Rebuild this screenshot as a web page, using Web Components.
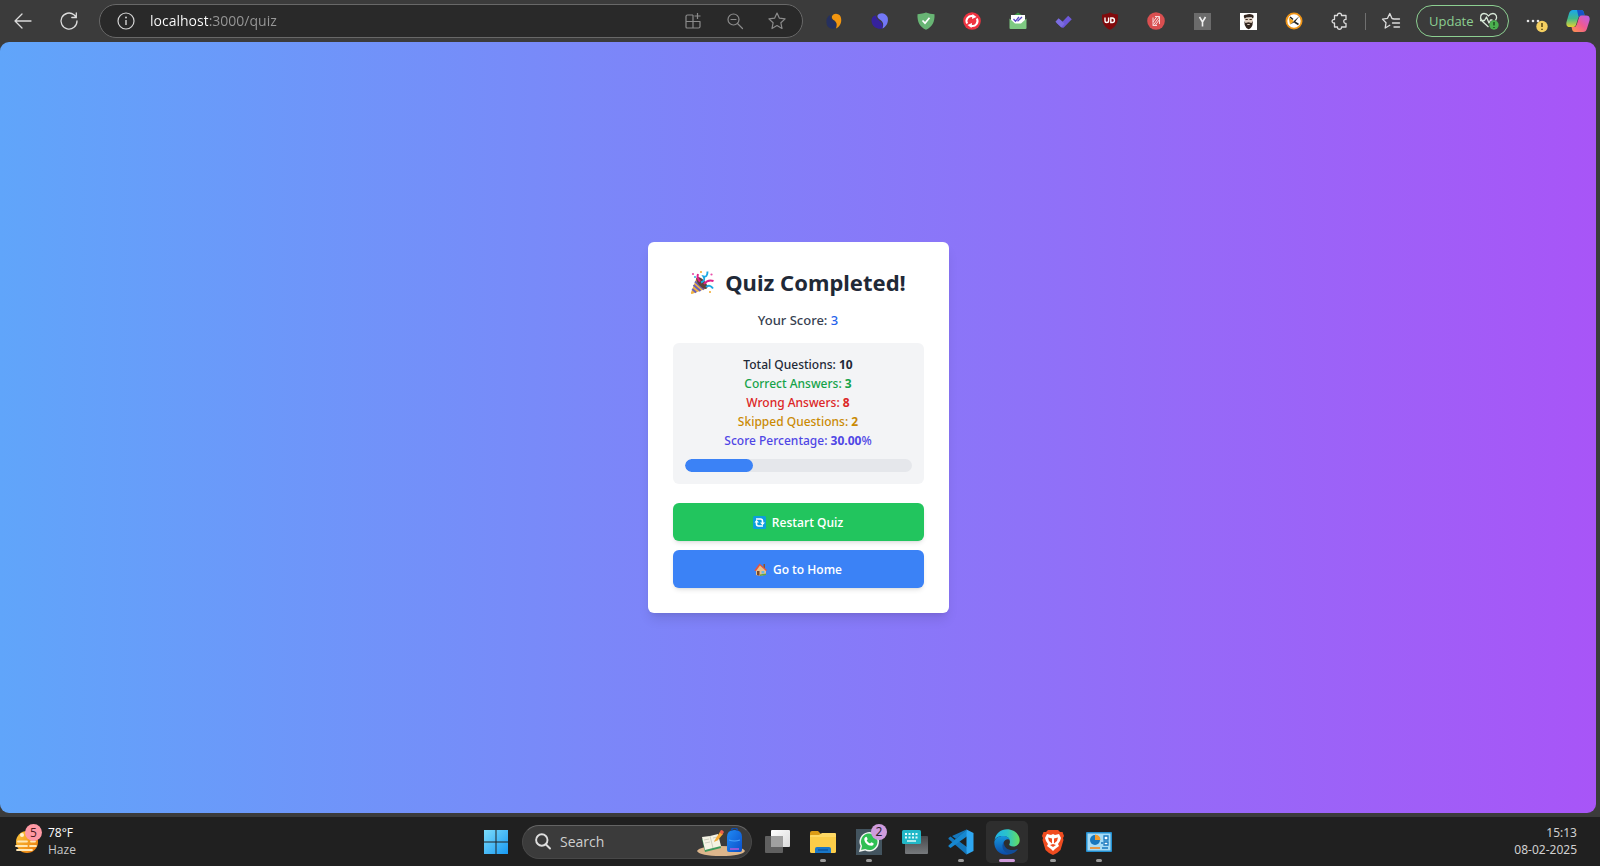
<!DOCTYPE html>
<html lang="en">
<head>
<meta charset="utf-8">
<title>Quiz</title>
<style>
  html, body { margin: 0; }
  body { font-family: "Noto Sans", "Open Sans", sans-serif; background: #3b3b3b; }
</style>
</head>
<body>
<desktop-shell></desktop-shell>
<script>
const define = (name, html, setup) => {
  const template = document.createElement('template');
  template.innerHTML = html;
  customElements.define(name, class extends HTMLElement {
    constructor() {
      super();
      this.attachShadow({ mode: 'open' }).append(template.content.cloneNode(true));
    }
    connectedCallback() { if (setup) setup(this, this.shadowRoot); }
  });
};

/* ---------- Browser toolbar ---------- */

define('tool-button', `
<style>
  :host { display: flex; flex: none; width: 46px; height: 40px; }
  button { flex: 1; display: flex; align-items: center; justify-content: center; padding: 0; border: 0; background: none; color: #dcdcdc; }
</style>
<button type="button"><slot></slot></button>`,
(el, root) => root.querySelector('button').setAttribute('aria-label', el.getAttribute('label')));

define('address-bar', `
<style>
  :host { display: flex; align-items: center; box-sizing: border-box; height: 34px; border: 1px solid #686868; border-radius: 17px; background: #292929; padding: 0 4px 0 16px; color: #d5d5d5; }
  label { display: flex; flex: none; margin-right: 14px; }
  input { flex: 1; min-width: 0; border: 0; outline: 0; padding: 0; font: 14px/20px "Open Sans", sans-serif; color: #fff;
    background: linear-gradient(to right, #fff 0 58px, #989898 58px); -webkit-background-clip: text; background-clip: text; -webkit-text-fill-color: transparent; }
  button { width: 42px; height: 32px; display: flex; align-items: center; justify-content: center; padding: 0; border: 0; background: none; color: #8b8b8b; }
</style>
<label for="url" aria-label="Address"><svg width="20" height="20" viewBox="0 0 20 20" fill="none" stroke="currentColor" stroke-width="1.2"><circle cx="10" cy="10" r="8"/><path d="M10 9v5" stroke-width="1.4"/><circle cx="10" cy="6.5" r=".4" fill="currentColor"/></svg></label>
<input id="url" type="text" value="localhost:3000/quiz" spellcheck="false">
<button aria-label="Install app"><svg width="18" height="18" viewBox="0 0 18 18" fill="none" stroke="currentColor" stroke-width="1.2" stroke-linejoin="round"><path d="M9 3H3.500Q2 3 2 4.500V15q0 1 1 1h11.500q1.500 0 1.500-1.500V9.500H2M9 3v13M13.500 1v6M10.500 4h6"/></svg></button>
<button aria-label="Zoom out"><svg width="18" height="18" viewBox="0 0 18 18" fill="none" stroke="currentColor" stroke-width="1.2" stroke-linecap="round"><circle cx="7.500" cy="7.500" r="5.500"/><path d="M5 7.500h5M11.500 11.500l5 5"/></svg></button>
<button aria-label="Add to favorites"><svg width="20" height="20" viewBox="0 0 20 20" fill="none" stroke="currentColor" stroke-width="1.200" stroke-linejoin="round"><path d="M10 2l2.400 5.200 5.700.7-4.200 3.900 1.100 5.700-5-2.900-5 2.900 1.100-5.700L1.900 7.900l5.700-.7z"/></svg></button>`);

define('update-button', `
<style>
  :host { display: block; margin-left: 2px; margin-right: 3px; }
  button { display: flex; align-items: center; justify-content: space-between; box-sizing: border-box; width: 93px; height: 32px; padding: 0 9px 0 12px; border: 1px solid #8ccf91; border-radius: 16px; background: none; color: #8ccf91; font: 13px/18px "Open Sans", sans-serif; }
</style>
<button type="button">Update
  <svg width="20" height="18" viewBox="0 0 20 18" fill="none" stroke="#d8e8d8" stroke-width="1.300" stroke-linejoin="round"><path d="M9.500 15L3 9C0 5.500 2 1.500 5 1.500c2 0 3.500 1 4.500 2.500 1-1.500 2.500-2.500 4.500-2.500 3 0 5 3.500 2.500 7M1 8.500h4.500l2-3.500 2.500 6 1.500-3h2"/><circle cx="15" cy="13" r="4.700" fill="#4bb04f" stroke="none"/><path d="M15 10v3.500M15 15v1" stroke="#173f1a"/></svg>
</button>`);

define('browser-toolbar', `
<style>
  :host { display: flex; align-items: center; height: 42px; background: #3b3b3b; padding: 0 2px 0 0; }
  address-bar { flex: 1; min-width: 240px; margin: 0 8px 0 7px; }
  .bar { flex: none; width: 1px; height: 17px; background: #707070; margin: 0 2px; }
  .last { width: 40px; }
</style>
<tool-button label="Back"><svg width="20" height="18" viewBox="0 0 20 18" fill="none" stroke="currentColor" stroke-width="1.300" stroke-linecap="round" stroke-linejoin="round"><path d="M18 9H2M9 2L2 9l7 7"/></svg></tool-button>
<tool-button label="Refresh"><svg width="20" height="20" viewBox="0 0 20 20" fill="none" stroke="currentColor" stroke-width="1.300" stroke-linecap="round"><path d="M18 10a8 8 0 1 1-3-6.200L17 6M17.300 2v4.500h-4.500"/></svg></tool-button>
<address-bar></address-bar>
<tool-button label="Extension, orange"><svg width="18" height="18" viewBox="0 0 18 18"><path d="M5 3C2 4.500 1 8 1.500 10.500a6 6 0 0 0 9.500 5c2-5-2-6-4-8C5.500 6 5 4.500 5 3z" fill="#26305e"/><path d="M7 4a5 5 0 0 1 9 2c1 4.500-1 8.500-5 10.500 1.500-4.500.5-6-1.500-8C7.500 7.500 6.500 6 7 4z" fill="#f3960f"/></svg></tool-button>
<tool-button label="Extension, blue"><svg width="18" height="18" viewBox="0 0 18 18"><path d="M5 3.500C1 3.500 0 8 .8 10.500c1 5 6 7 10.700 6 1-6-2.500-7-4.500-9C5.500 6 5 5 5 3.500z" fill="#35229c"/><path d="M6.500 3.500c2-3.500 8-3 10 1.500 1.500 5-1 9.500-5 11.500 1.500-4.500.5-6.500-2-8.500-2-1.500-3.500-2.500-3-4.500z" fill="#7378f7"/></svg></tool-button>
<tool-button label="Ad blocker"><svg width="18" height="18" viewBox="0 0 18 18"><path d="M9 .5Q13 2 17.500 2.200C18 10 15 15 9 17.800 3 15 0 10 .5 2.200 5 2 9 .5 9 .5z" fill="#68b574"/><path d="M5.500 8.500L8 11.200l4.500-5.500" fill="none" stroke="#fff" stroke-width="1.700"/></svg></tool-button>
<tool-button label="Screen recorder"><svg width="18" height="18" viewBox="0 0 18 18"><circle cx="9" cy="9" r="8.800" fill="#ef3340"/><path d="M4.200 11.500A5 5 0 0 1 10 4.200M13.800 6.500A5 5 0 0 1 8 13.800" fill="none" stroke="#fff" stroke-width="2"/><path d="M9.500 2l4 3-4.500 2zM8.500 16l-4-3L9 11z" fill="#fff"/></svg></tool-button>
<tool-button label="Mail tracker"><svg width="18" height="18" viewBox="0 0 18 18"><path d="M1 6l8-5.500L17 6z" fill="#3e9b48"/><path d="M2 3h14v11H2z" fill="#fff"/><path d="M.5 6.500L6 11.500h6l5.500-5V16q0 1-1 1h-15q-1 0-1-1z" fill="#7ec982"/><path d="M4.500 7l2 2.200L10 5M8.500 9.200L13 5" fill="none" stroke="#5648c2" stroke-width="1.300"/></svg></tool-button>
<tool-button label="Tasks"><svg width="18" height="18" viewBox="0 0 18 18"><path d="M3 9l4.500 4.200L15 5.500" fill="none" stroke="#6d58d9" stroke-width="5" stroke-linejoin="round"/><path d="M2 8l6 5.500" stroke="#7b6de0" stroke-width="4.600"/></svg></tool-button>
<tool-button label="uBlock"><svg width="18" height="18" viewBox="0 0 18 18"><path d="M9 .5Q13 2.500 17 2.500C17.500 10 15 15 9 17.800 3 15 .5 10 1 2.500 5 2.500 9 .5 9 .5z" fill="#800a0c"/><path d="M4 5.500v3.200q0 1.800 1.800 1.800t1.800-1.800V5.500M9.800 6h1.400a2.200 2.200 0 0 1 0 4.500H9.800z" fill="none" stroke="#fff" stroke-width="1.400"/></svg></tool-button>
<tool-button label="Page tools"><svg width="18" height="18" viewBox="0 0 18 18"><circle cx="9" cy="9" r="8.800" fill="#d94f50"/><path d="M6 5.500v8h4M8 4.500h4.500V12M6 13.500l6.500-9M8.500 13l4-5.500M6 10l4-5.500" fill="none" stroke="#f6dada" stroke-width="1"/></svg></tool-button>
<tool-button label="Y extension"><svg width="17" height="17" viewBox="0 0 17 17"><path d="M0 0h17v17H0z" fill="#6b6b6b"/><path d="M5.500 4l3 5 3-5M8.500 9v4.500" fill="none" stroke="#f0f0f0" stroke-width="1.600"/></svg></tool-button>
<tool-button label="Bearded man"><svg width="17" height="17" viewBox="0 0 17 17"><path d="M0 0h17v17H0z" fill="#fff"/><path d="M4.500 5h8l.3 4-1 3.500H5.300z" fill="#e0cfc0"/><path d="M4.500 5.500Q2.500 1.500 6 1.800q3.500-1.500 6.500 0 2 1 .5 3.700l-1.500-1.300-5 .3zM4.300 8l1.200 2 3-.7 3 .7 1.300-2-.3 4q-1.500 3.800-4 4.300Q6 15.500 4.700 12z" fill="#33261f"/><path d="M5.500 6.500h2.300M9.500 6.500h2.300" stroke="#33261f" stroke-width="1.200"/><path d="M7.300 11.500h2.400" stroke="#e0cfc0"/></svg></tool-button>
<tool-button label="Tag cleaner"><svg width="18" height="18" viewBox="0 0 18 18"><circle cx="9" cy="9" r="7.600" fill="#fff" stroke="#ef9416" stroke-width="1.800"/><path d="M5 12.500L14.500 4 10 10z" fill="#222"/><path d="M3.500 5.500L9 9l-4 3.500z" fill="#f5a623"/><path d="M9.500 10l4 2.500M5 5l3 2.500" stroke="#222" stroke-width="1.600"/></svg></tool-button>
<tool-button label="Extensions"><svg width="18" height="18" viewBox="0 0 18 18" fill="none" stroke="currentColor" stroke-width="1.300" stroke-linejoin="round"><path d="M3.500 3.500h3C6 .5 11 .5 10.500 3.500h4.500v4c-3-.8-3 4.500 0 3.800V15h-4.500c.5 3-4.500 3-4 0h-3v-4C.3 11.500.3 7 3.500 7.500z"/></svg></tool-button>
<div class="bar"></div>
<tool-button label="Favorites"><svg width="20" height="18" viewBox="0 0 20 18" fill="none" stroke="currentColor" stroke-width="1.300" stroke-linejoin="round" stroke-linecap="round"><path d="M11 6.500L8.800 1.500 6.500 6.300l-5 .8L5 10.800 4.200 16l4.600-2.700M13 7h5.500M11.500 11h7M13 15h5.500M11 6.500l2 .5"/></svg></tool-button>
<update-button></update-button>
<tool-button label="Settings and more"><svg width="26" height="26" viewBox="0 0 26 26" fill="#e4e4e4"><circle cx="6" cy="13" r="1.300"/><circle cx="11" cy="13" r="1.300"/><circle cx="16" cy="13" r="1.300"/><circle cx="20" cy="18.500" r="5.700" fill="#f5cf60"/><path d="M20 15v4M20 20.800v1.200" stroke="#4b3b0d" stroke-width="1.400"/></svg></tool-button>
<tool-button class="last" label="Copilot"><svg width="24" height="24" viewBox="0 0 24 24">
<defs><linearGradient id="ca" x1="0" y1="0" x2="0" y2="1"><stop offset="0" stop-color="#19a7ee"/><stop offset=".5" stop-color="#3fb98b"/><stop offset="1" stop-color="#e4d331"/></linearGradient><linearGradient id="cb" x1="1" y1="0" x2="0" y2="1"><stop offset="0" stop-color="#b65ff0"/><stop offset=".5" stop-color="#ef5a92"/><stop offset="1" stop-color="#ff9648"/></linearGradient></defs>
<path d="M7 1h8q2.500 0 3 3l.6 2.500H15q-2 0-2.800 2.500L10 16q-.8 2-2.500 2H4q-4.500 0-3.500-5L3 4.500Q4 1 7 1z" fill="url(#ca)"/><path d="M11 1h4q2.500 0 3 3l.6 2.500H15q-2 0-2.500 1.500z" fill="#1754c8"/><path d="M17 23H9q-2.500 0-3-3l-.5-2H8q2 0 2.800-2.500L13 8.500q.8-2 2.500-2H20q4.500 0 3.500 5L21 19.500q-1 3.500-4 3.500z" fill="url(#cb)"/></svg></tool-button>`);

/* ---------- Quiz result ---------- */

define('stat-line', `
<style>
  :host { display: block; font-size: 12px; line-height: 19px; font-weight: 500; color: var(--tone, #1f2937); }
  ::slotted(strong) { font-weight: 700; }
</style>
<slot></slot>`);

define('score-meter', `
<style>
  :host { display: block; margin-top: 9px; }
  progress { display: block; width: 100%; height: 13px; border: 0; border-radius: 7px; overflow: hidden; appearance: none; -webkit-appearance: none; background: #e5e7eb; }
  progress::-webkit-progress-bar { background: #e5e7eb; }
  progress::-webkit-progress-value { background: #3b82f6; border-radius: 7px; }
</style>
<progress max="100" aria-label="Score percentage"></progress>`,
(el, root) => { root.querySelector('progress').value = Number(el.getAttribute('value')); });

define('quiz-button', `
<style>
  :host { display: block; }
  button { display: flex; align-items: center; justify-content: center; gap: 6px; width: 100%; height: 38px; padding: 0; border: 0; border-radius: 6px; color: #fff; background: var(--fill); font: 600 12px/19px "Open Sans", sans-serif; box-shadow: 0 3px 5px -1px rgb(0 0 0 / .1), 0 2px 3px -2px rgb(0 0 0 / .1); }
</style>
<button type="button"><slot name="icon"></slot><span><slot></slot></span></button>`);

define('quiz-result', `
<style>
  :host { display: block; box-sizing: border-box; width: 301px; padding: 25px; border-radius: 6px; background: #fff; text-align: center; box-shadow: 0 8px 12px -2px rgb(0 0 0 / .1), 0 3px 5px -3px rgb(0 0 0 / .1); }
  h1 { display: flex; align-items: center; justify-content: center; gap: 10px; margin: 0; font-size: 22px; line-height: 31px; font-weight: 700; color: #1f2937; white-space: nowrap; }
  .score { margin: 10px 0 11px; font-size: 13px; line-height: 24px; font-weight: 500; color: #374151; }
  .score span { color: #2563eb; }
  .stats { padding: 12px; border-radius: 6px; background: #f3f4f6; }
  .actions { display: grid; gap: 9px; margin-top: 19px; }
  .green { --tone: #16a34a; } .red { --tone: #dc2626; } .gold { --tone: #ca8a04; } .indigo { --tone: #4f46e5; }
  .restart { --fill: #22c55e; } .home { --fill: #3b82f6; }
</style>
<h1><svg width="25" height="25" viewBox="0 0 25 25" aria-hidden="true">
  <path d="M6.500 8l10 10.500L2 24Q.5 24 1 22.500z" fill="#f1b541"/><path d="M5 11.500l9 8M3.500 15l7 6M2.200 19l4 3.500" stroke="#6b60ba" stroke-width="2"/><ellipse cx="11.800" cy="13" rx="3.400" ry="7.400" transform="rotate(-43 11.800 13)" fill="#60413a"/>
  <path d="M8 4q-1.500 4 2 7.500M14 14q4-5 9.500-3" fill="none" stroke="#e0218a" stroke-width="2"/><path d="M11 12.500q5-2 2.500-6 4 1 4-5M16 17q4-3 7 1.500" fill="none" stroke="#1ba7e3" stroke-width="1.900"/>
  <circle cx="3" cy="4" r="1.100" fill="#e94faa"/><circle cx="11" cy="2" r="1" fill="#f1a92d"/><circle cx="21.500" cy="4.500" r="1.100" fill="#e94faa"/><circle cx="20" cy="22" r="1" fill="#f1a92d"/><circle cx="5" cy="7" r=".9" fill="#1ba7e3"/></svg>Quiz Completed!</h1>
<p class="score">Your Score: <span>3</span></p>
<div class="stats">
  <stat-line>Total Questions: <strong>10</strong></stat-line>
  <stat-line class="green">Correct Answers: <strong>3</strong></stat-line>
  <stat-line class="red">Wrong Answers: <strong>8</strong></stat-line>
  <stat-line class="gold">Skipped Questions: <strong>2</strong></stat-line>
  <stat-line class="indigo">Score Percentage: <strong>30.00</strong>%</stat-line>
  <score-meter value="30"></score-meter>
</div>
<div class="actions">
  <quiz-button class="restart"><svg slot="icon" width="13" height="13" viewBox="0 0 13 13"><rect width="13" height="13" rx="1.500" fill="#0c9ede"/><path d="M3 3h4.500q2 0 2 2v2M10 10H5.500q-2 0-2-2V6" fill="none" stroke="#fff" stroke-width="1.600"/><path d="M7 6.500h5l-2.500 2.800zM1.500 6.500h4.500L3.500 3.800z" fill="#fff"/></svg>Restart Quiz</quiz-button>
  <quiz-button class="home"><svg slot="icon" width="13" height="13" viewBox="0 0 13 13"><path d="M9.500 1H11v4H9.500z" fill="#8e562e"/><path d="M2 6l3.500-4.500L12 7v4.500L6 13l-4-1z" fill="#e8c08c"/><path d="M5.500.5L13 7l-1 1-6-5.500L2 8 .3 7.500z" fill="#e5533d"/><path d="M3 8h2.500v4.700L3 12z" fill="#77492d"/><path d="M7.500 8h2.800v2.500H7.500z" fill="#68b9e7"/><path d="M6 11.500l6-1V12l-6 1z" fill="#68a43d"/></svg>Go to Home</quiz-button>
</div>`);

define('quiz-page', `
<style>
  :host { display: flex; align-items: center; justify-content: center; margin-right: 4px; border-radius: 9px; background: linear-gradient(to right, #60a5fa, #a855f7); }
</style>
<quiz-result></quiz-result>`);

/* ---------- Taskbar ---------- */

define('task-item', `
<style>
  :host { display: block; flex: none; width: 46px; }
  button { position: relative; display: flex; align-items: center; justify-content: center; width: 42px; height: 42px; margin: 0 auto; padding: 0; border: 0; border-radius: 5px; background: none; font: inherit; }
  :host([active]) button { background: #2e2e2e; }
  :host([running]) button::after { content: ""; position: absolute; bottom: 1px; left: 18px; width: 6px; height: 3px; border-radius: 2px; background: #9a9a9a; }
  :host([active]) button::after { left: 13px; width: 16px; background: #cf9adb; }
  ::slotted(.badge) { position: absolute; top: 3px; right: 3px; width: 16px; height: 16px; border-radius: 8px; background: #cf9bdc; color: #2a1b2e; font-size: 12px; line-height: 16px; text-align: center; }
</style>
<button type="button"><slot></slot></button>`,
(el, root) => root.querySelector('button').setAttribute('aria-label', el.getAttribute('label')));

define('weather-widget', `
<style>
  :host { display: block; }
  button { display: flex; gap: 6px; align-items: center; padding: 0; border: 0; background: none; color: #fff; font: 12px/17px "Open Sans", sans-serif; text-align: left; }
  .icon { position: relative; display: block; width: 28px; height: 34px; }
  .icon svg { display: block; padding-top: 5px; }
  .badge { position: absolute; top: -1px; right: 0; width: 17px; height: 17px; border-radius: 9px; background: #ff99a4; color: #4d1b21; line-height: 17px; text-align: center; }
  .text { padding-bottom: 2px; }
  .text span { display: block; }
  .sky { color: #c8c8c8; }
</style>
<button type="button"><span class="icon"><svg width="26" height="24" viewBox="0 0 26 24"><defs><linearGradient id="sun" x1="0" y1="0" x2="1" y2="1"><stop offset="0" stop-color="#ffcb3f"/><stop offset="1" stop-color="#e87406"/></linearGradient></defs><circle cx="13" cy="12" r="11" fill="url(#sun)"/><path d="M4 11.500h9M17 11.500h4M2 16h11M16 16h6M3 20h15" stroke="#ffe7b5" stroke-width="1.800" stroke-linecap="round"/><circle cx="8" cy="5" r="2" fill="#fff3cf"/></svg><span class="badge">5</span></span>
<span class="text"><span>78°F</span><span class="sky">Haze</span></span></button>`);

define('task-search', `
<style>
  :host { display: flex; align-items: center; box-sizing: border-box; width: 230px; height: 34px; margin: 0 2px 0 3px; padding: 0 6px 0 12px; border: 1px solid #484848; border-top-color: #646464; border-radius: 17px; background: #3b3b3b; }
  label { display: flex; margin-right: 9px; }
  input { flex: 1; min-width: 0; padding: 0; border: 0; outline: 0; background: none; font: 14px/20px "Open Sans", sans-serif; color: #fff; }
  input::placeholder { color: #cfcfcf; }
</style>
<label for="q" aria-label="Search"><svg width="16" height="17" viewBox="0 0 16 17" fill="none" stroke="#dedede" stroke-width="1.900" stroke-linecap="round"><circle cx="6.800" cy="7" r="5.700"/><path d="M11 11.500l4 4"/></svg></label>
<input id="q" type="text" placeholder="Search">
<svg width="48" height="28" viewBox="0 0 48 28"><defs><linearGradient id="bag" x1="0" y1="0" x2="1" y2="1"><stop offset="0" stop-color="#1f8af5"/><stop offset="1" stop-color="#0b4fc8"/></linearGradient></defs><path d="M0 23q3-5 24-5t24 5q-3 5-24 5T0 23z" fill="#dcb68c"/><path d="M5 11l16-3 3 12-16 4z" fill="#3f9a5c"/><path d="M5 9l8-1 8-2 3 12-8 2-8 2z" fill="#f5f3e4"/><path d="M13 8l3 12M7 12l5-1M8 15l5-1M16 10l4-1M17 13l4-1" stroke="#c4c6b8" stroke-width=".8"/><path d="M17 14l2-4 4-6 3 2-5 6z" fill="#f6ac35"/><path d="M22.500 4.500L24 2q2 0 3 2l-1.500 2.500z" fill="#ea604b"/><path d="M30 22V9q0-7 7.500-7T45 9v13q0 2-2 2H32q-2 0-2-2z" fill="url(#bag)"/><path d="M34.500 3q0-3 3-3t3 3" fill="none" stroke="#0d4eaf" stroke-width="1.500"/><path d="M32 12q5.500 2 11 0" stroke="#4ba3fb" stroke-width="1.200" fill="none"/><path d="M33 21h9" stroke="#9b5bdc" stroke-width="1.800"/></svg>`);

define('task-bar', `
<style>
  :host { display: grid; grid-template-columns: 1fr auto 1fr; align-items: center; height: 49px; padding-right: 5px; background: #202020; }
  weather-widget { padding-left: 14px; }
  nav { display: flex; align-items: center; }
  .clock { justify-self: end; padding: 0 18px 2px 0; border: 0; background: none; color: #d0d0d0; font: 12px/17px "Noto Sans", sans-serif; text-align: right; }
  .clock time { display: block; }
</style>
<weather-widget></weather-widget>
<nav>
<task-item label="Start"><svg width="24" height="24" viewBox="0 0 24 24"><defs><linearGradient id="win" x1="0" y1="0" x2="1" y2="1"><stop offset="0" stop-color="#7cdcfa"/><stop offset="1" stop-color="#1899f2"/></linearGradient></defs><path d="M0 0h11.500v11.500H0zM12.500 0H24v11.500H12.500zM0 12.500h11.500V24H0zM12.500 12.500H24V24H12.500z" fill="url(#win)"/></svg></task-item>
<task-search></task-search>
<task-item label="Task view"><svg width="26" height="24" viewBox="0 0 26 24"><defs><linearGradient id="tv" x1="0" y1="0" x2="1" y2="1"><stop offset="0" stop-color="#fff"/><stop offset="1" stop-color="#d9d9d9"/></linearGradient></defs><rect x="7" y="0" width="19" height="17" rx="1" fill="url(#tv)"/><rect x="1" y="6" width="18" height="17" rx="1" fill="#606060"/><path d="M7 6h12v11H7z" fill="#a0a0a0"/></svg></task-item>
<task-item label="File Explorer" running><svg width="26" height="24" viewBox="0 0 26 24"><path d="M0 3q0-2 2-2h6l3 3h13q1 0 1 1v6H0z" fill="#dc9c16"/><rect y="5" width="26" height="18" rx="1.500" fill="#fccd49"/><path d="M0 6q0-1 1-1h8l3-2h13q1 0 1 1v3H0z" fill="#ffd964"/><path d="M5 23v-4q0-2 2-2h12q2 0 2 2v4z" fill="#1977c8"/><path d="M8 20h10" stroke="#0c56a0" stroke-width="1.500"/></svg></task-item>
<task-item label="WhatsApp" running><svg width="26" height="26" viewBox="0 0 26 26"><path d="M0 0h26v26H0z" fill="#43545f"/><path d="M4 22l1.300-5A9 9 0 1 1 9 20.700z" fill="#2fbf54" stroke="#f2f5f2" stroke-width="1.500"/><path d="M9 8.500q1.500-1.500 2 0l.7 1.700-1 1.300q1 2 3.300 3l1.300-1.300 2.200 1q.5 2.300-2 2.600c-4 0-7.500-4-7.200-6.800q0-1 .7-1.500z" fill="#fff"/></svg><span class="badge">2</span></task-item>
<task-item label="On-screen keyboard"><svg width="26" height="26" viewBox="0 0 26 26"><defs><linearGradient id="kb" x1="0" y1="0" x2="0" y2="1"><stop offset="0" stop-color="#46484b"/><stop offset="1" stop-color="#777a7d"/></linearGradient></defs><rect x="3" y="7" width="23" height="18" rx="1" fill="url(#kb)"/><rect x="0" y="1" width="19" height="14" rx="1.500" fill="#21b8c8"/><path d="M3 5h13M3 8.500h13" stroke="#e0fafa" stroke-width="1.800" stroke-dasharray="2 1.500"/><path d="M5 12h9" stroke="#e0fafa" stroke-width="1.500"/></svg></task-item>
<task-item label="Visual Studio Code" running><svg width="26" height="26" viewBox="0 0 26 26"><path d="M18.500.5L7 11 2.500 7.500.5 9v1L18.500 25.500l1-7L4 7z" fill="#1477bd"/><path d="M18.500.5L.5 16.500v1l2 1.500L19.500 7z" fill="#1687d0"/><path d="M18.500.5L25.500 4v18l-7 3.500z" fill="#2ea7f2"/></svg></task-item>
<task-item label="Microsoft Edge" running active><svg width="26" height="26" viewBox="0 0 26 26"><defs><linearGradient id="e1" x1="0" y1="0" x2="1" y2="0"><stop offset="0" stop-color="#1eb1e8"/><stop offset=".5" stop-color="#2bc3c9"/><stop offset="1" stop-color="#66e05e"/></linearGradient><linearGradient id="e2" x1="0" y1="0" x2="0" y2="1"><stop offset="0" stop-color="#1696dc"/><stop offset="1" stop-color="#0b4ba9"/></linearGradient></defs><path d="M.5 11C2 4 7 .3 13 .3c7 0 12.700 5 12.700 11 0 4-3 6.200-6.500 6.200-3 0-4.500-1.200-3.800-2.500C17 12 15 7 9 7 5 7 2 8.500.5 11z" fill="url(#e1)"/><path d="M.3 13C1 9 5 7 9 7c4 0 6.500 2 7 4-2-1.500-6-.5-6.500 3.500C9 19.500 14 24 19 23.500 17 25 15 25.700 12.500 25.700 5 25.700 0 20 .3 13z" fill="url(#e2)"/><path d="M10 12.500c-4 5 0 13 7.500 12.300 3-.8 5.500-3 6.500-5-6 3-15 1-14-7.300z" fill="#124c96"/></svg></task-item>
<task-item label="Brave" running><svg width="24" height="26" viewBox="0 0 24 26"><path d="M7 1h10l2 2h2.500L23 7l-1 2 .5 2-3 10q-2 2.500-7.500 5-5.500-2.500-7.500-5l-3-10L2 9 1 7l1.500-4H5z" fill="#f04c20"/><path d="M6 5l4 1 2-1 2 1 4-1 2 4-1 3-2 3 1 2-4 3-2 2-2-2-4-3 1-2-2-3-1-3z" fill="#fff"/><path d="M7 8.500l4 1v5L8 12zM17 8.500l-4 1v5l3-2.500zM9 16l3-1 3 1-3 2z" fill="#f04c20"/></svg></task-item>
<task-item label="Control Panel" running><svg width="26" height="22" viewBox="0 0 26 22"><rect width="26" height="20" y="1" rx="1" fill="#238fd0"/><rect x="1.500" y="2.500" width="23" height="17" fill="#a7dcf6"/><circle cx="9" cy="9" r="5" fill="#1877bd"/><path d="M9 9V3.500A5.500 5.500 0 0 1 14.500 9z" fill="#f39b2b"/><path d="M4 17h10" stroke="#ef8b28" stroke-width="1.700"/><path d="M16 17h6M18 5h4v4h-4zM18 11h4v3h-4zM15 12h2" stroke="#1877bd" stroke-width="1.300" fill="#fff"/></svg></task-item>
</nav>
<button class="clock" type="button"><time>15:13</time><time datetime="2025-02-08">08-02-2025</time></button>`);

define('desktop-shell', `
<style>
  :host { display: flex; flex-direction: column; min-height: 100vh; background: #3b3b3b; }
  quiz-page { flex: 1; margin-bottom: 4px; }
</style>
<browser-toolbar></browser-toolbar>
<quiz-page></quiz-page>
<task-bar></task-bar>`);
</script>
</body>
</html>
